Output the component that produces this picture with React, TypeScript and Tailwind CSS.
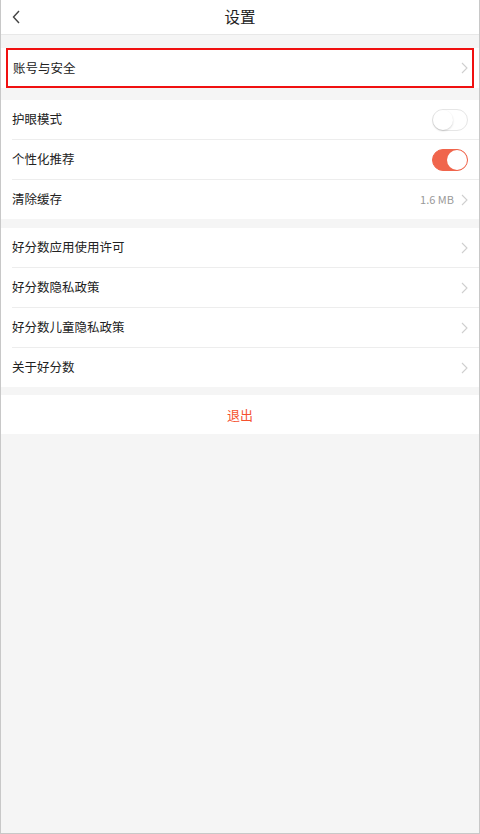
import { useState } from 'react'

const font = { fontFamily: '"Noto Sans CJK SC", "Noto Sans", sans-serif' }

function Chevron() {
  return (
    <svg width="7" height="12" viewBox="0 0 7 12" fill="none" className="shrink-0">
      <path d="M1 1l5 5-5 5" stroke="#cfcfcf" strokeWidth="1.1" />
    </svg>
  )
}

function Toggle({ on, onClick }: { on: boolean; onClick: () => void }) {
  return (
    <button
      onClick={onClick}
      className={`relative w-[36px] h-[22px] rounded-full border transition-colors ${
        on ? 'bg-[#f0654c] border-[#f0654c]' : 'bg-white border-[#e6e6e6]'
      }`}
    >
      <span
        className={`absolute top-[0px] w-[20px] h-[20px] rounded-full bg-white ${
          on ? 'right-[0px]' : 'left-[0px] shadow-[0_1px_2px_rgba(0,0,0,0.18)]'
        }`}
      />
    </button>
  )
}

function Row({
  label,
  divider = true,
  right,
}: {
  label: string
  divider?: boolean
  right?: React.ReactNode
}) {
  return (
    <div className="pl-[11px] bg-white">
      <div
        className={`flex items-center justify-between pr-[11px] ${
          divider ? 'h-[40px] border-b border-[#ededed]' : 'h-[39px]'
        }`}
      >
        <span className="text-[12.5px] text-[#222]">{label}</span>
        {right ?? <Chevron />}
      </div>
    </div>
  )
}

export default function App() {
  const [eyeCare, setEyeCare] = useState(false)
  const [personal, setPersonal] = useState(true)

  return (
    <div
      className="w-[480px] h-[834px] bg-[#f5f5f5] border-x border-b border-[#c8c8c8] flex flex-col overflow-hidden"
      style={font}
    >
      {/* Header */}
      <div className="h-[35px] bg-white border-b border-[#e8e8e8] relative flex items-center justify-center">
        <svg
          width="9"
          height="14"
          viewBox="0 0 9 14"
          fill="none"
          className="absolute left-[11px] top-[10px]"
        >
          <path d="M7 1L1.5 7 7 13" stroke="#444" strokeWidth="1.4" />
        </svg>
        <span className="text-[15.5px] text-[#222]">设置</span>
      </div>

      {/* Account */}
      <div className="mt-[13px] bg-white px-[5px]">
        <div className="h-[40px] border-2 border-[#f01010] flex items-center justify-between pl-[5px] pr-[4px]">
          <span className="text-[12.5px] text-[#222]">账号与安全</span>
          <Chevron />
        </div>
      </div>

      {/* Preferences */}
      <div className="mt-[12px]">
        <Row label="护眼模式" right={<Toggle on={eyeCare} onClick={() => setEyeCare(!eyeCare)} />} />
        <Row label="个性化推荐" right={<Toggle on={personal} onClick={() => setPersonal(!personal)} />} />
        <Row
          label="清除缓存"
          divider={false}
          right={
            <div className="flex items-center gap-[7px]">
              <span className="text-[11px] text-[#999]">1.6 MB</span>
              <Chevron />
            </div>
          }
        />
      </div>

      {/* About */}
      <div className="mt-[9px]">
        <Row label="好分数应用使用许可" />
        <Row label="好分数隐私政策" />
        <Row label="好分数儿童隐私政策" />
        <Row label="关于好分数" divider={false} />
      </div>

      {/* Logout */}
      <div className="mt-[8px] h-[39px] bg-white flex items-center justify-center">
        <span className="text-[13px] text-[#f5512f]">退出</span>
      </div>
    </div>
  )
}
